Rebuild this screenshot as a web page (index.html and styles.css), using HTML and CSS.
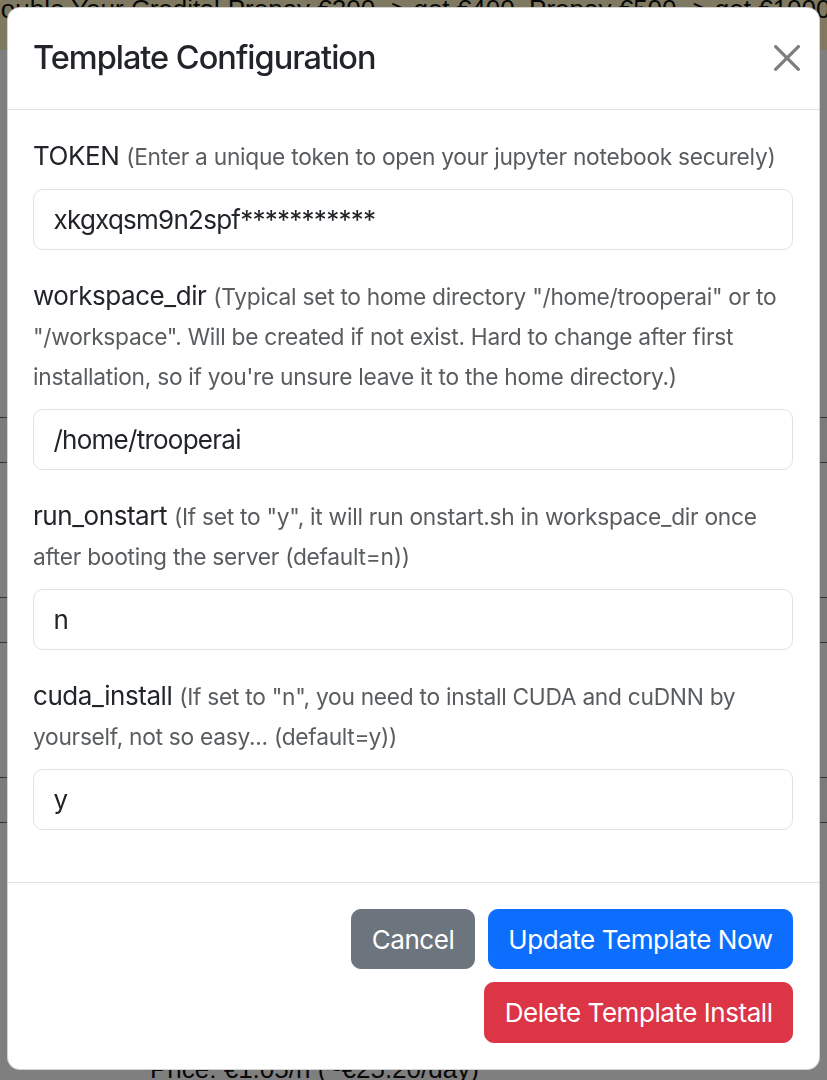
FILE: index.html
```html
<!DOCTYPE html>
<html lang="en">
<head>
<meta charset="utf-8">
<title>Template Configuration</title>
<link rel="stylesheet" href="styles.css">
</head>
<body>
<div class="page">
  <div class="promo"><span class="promo-text">Double Your Credits! Prepay €200 -&gt; get €400, Prepay €500 -&gt; get €1000</span></div>
  <div class="page-rows">
    <div class="page-row"></div>
    <div class="page-row"></div>
    <div class="page-row"></div>
  </div>
  <div class="page-price">Price: €1.05/h (~€25.20/day)</div>
</div>
<div class="backdrop"></div>
<div class="modal">
  <div class="modal-header">
    <h5 class="modal-title">Template Configuration</h5>
    <button class="btn-close" type="button" aria-label="Close">
      <svg viewBox="0 0 16 16" width="26" height="26"><path d="M.293.293a1 1 0 0 1 1.414 0L8 6.586 14.293.293a1 1 0 1 1 1.414 1.414L9.414 8l6.293 6.293a1 1 0 0 1-1.414 1.414L8 9.414l-6.293 6.293a1 1 0 0 1-1.414-1.414L6.586 8 .293 1.707a1 1 0 0 1 0-1.414z" fill="#000"/></svg>
    </button>
  </div>
  <div class="modal-body">
    <div class="field">
      <label class="form-label">TOKEN <small class="form-text">(Enter a unique token to open your jupyter notebook securely)</small></label>
      <input class="form-control" type="text" value="xkgxqsm9n2spf***********">
    </div>
    <div class="field">
      <label class="form-label">workspace_dir <small class="form-text">(Typical set to home directory "/home/trooperai" or to "/workspace". Will be created if not exist. Hard to change after first installation, so if you're unsure leave it to the home directory.)</small></label>
      <input class="form-control" type="text" value="/home/trooperai">
    </div>
    <div class="field">
      <label class="form-label">run_onstart <small class="form-text">(If set to "y", it will run onstart.sh in workspace_dir once after booting the server (default=n))</small></label>
      <input class="form-control" type="text" value="n">
    </div>
    <div class="field">
      <label class="form-label">cuda_install <small class="form-text">(If set to "n", you need to install CUDA and cuDNN by yourself, not so easy... (default=y))</small></label>
      <input class="form-control" type="text" value="y">
    </div>
  </div>
  <div class="modal-footer">
    <div class="footer-row">
      <button class="btn btn-secondary" type="button">Cancel</button>
      <button class="btn btn-primary" type="button">Update Template Now</button>
    </div>
    <div class="footer-row">
      <button class="btn btn-danger" type="button">Delete Template Install</button>
    </div>
  </div>
</div>
</body>
</html>
```
FILE: styles.css
```css
* { box-sizing: border-box; }
html, body { margin: 0; padding: 0; }
body {
  width: 827px;
  height: 1080px;
  overflow: hidden;
  font-family: Inter, "Liberation Sans", sans-serif;
  color: #212529;
  background: #fff;
}
.page {
  height: 1080px;
  display: flex;
  flex-direction: column;
}
.promo {
  height: 50px;
  background: #fff3c4;
  overflow: hidden;
  white-space: nowrap;
}
.promo-text {
  display: block;
  margin-left: -18px;
  font-family: "Liberation Sans", Arial, sans-serif;
  font-size: 26px;
  line-height: 18px;
  color: #111;
}
.page-rows {
  flex: 1;
  display: flex;
  flex-direction: column;
  justify-content: space-around;
  padding: 300px 0 150px;
}
.page-row {
  height: 46px;
  border-top: 1px solid #666;
  border-bottom: 1px solid #666;
  background: #f7f7f7;
}
.page-price {
  height: 40px;
  padding: 14px 0 0 150px;
  font-family: "Liberation Sans", Arial, sans-serif;
  font-size: 26px;
  line-height: 30px;
  color: #111;
  overflow: hidden;
}
.backdrop {
  position: fixed;
  inset: 0;
  background: rgba(0, 0, 0, 0.5);
}
.modal {
  position: fixed;
  left: 7px;
  top: 7px;
  width: 813px;
  background: #fff;
  border: 1px solid rgba(0, 0, 0, 0.175);
  border-radius: 13px;
  overflow: hidden;
}
.modal-header {
  display: flex;
  align-items: center;
  padding: 26px 26px 26px 25px;
  border-bottom: 1px solid #dee2e6;
}
.modal-title {
  margin: 0;
  font-size: 32.5px;
  line-height: 1.5;
  font-weight: 500;
  letter-spacing: -1px;
}
.btn-close {
  box-sizing: content-box;
  width: 26px;
  height: 26px;
  padding: 6.5px;
  margin: -13px -13px -13px auto;
  border: 0;
  background: transparent;
  opacity: 0.5;
  display: flex;
  align-items: center;
  justify-content: center;
}
.btn-close svg { display: block; }
.modal-body {
  padding: 26px 26px 26px 25px;
}
.field {
  margin-bottom: 26px;
}
.form-label {
  display: block;
  font-size: 26px;
  line-height: 40px;
  letter-spacing: -0.45px;
  margin-bottom: 13px;
}
.form-text {
  font-size: 22.75px;
  line-height: 1;
  letter-spacing: -0.28px;
  color: rgba(33, 37, 41, 0.75);
}
.form-control {
  display: block;
  width: 100%;
  height: 61px;
  padding: 9.75px 19.5px;
  font-family: Inter, "Liberation Sans", sans-serif;
  font-size: 26px;
  line-height: 39px;
  letter-spacing: -0.75px;
  color: #212529;
  background: #fff;
  border: 1px solid #dee2e6;
  border-radius: 9.75px;
  outline: none;
}
.modal-footer {
  display: flex;
  flex-direction: column;
  align-items: flex-end;
  padding: 19.5px;
  border-top: 1px solid #dee2e6;
}
.footer-row {
  display: flex;
  justify-content: flex-end;
}
.btn {
  margin: 6.5px;
  padding: 9.75px 19.5px;
  font-family: Inter, "Liberation Sans", sans-serif;
  font-size: 26px;
  line-height: 39px;
  font-weight: 400;
  letter-spacing: -0.45px;
  color: #fff;
  border: 1px solid transparent;
  border-radius: 9.75px;
}
.btn-secondary { background: #6c757d; border-color: #6c757d; }
.btn-primary { background: #0d6efd; border-color: #0d6efd; }
.btn-danger { background: #dc3545; border-color: #dc3545; }
```
